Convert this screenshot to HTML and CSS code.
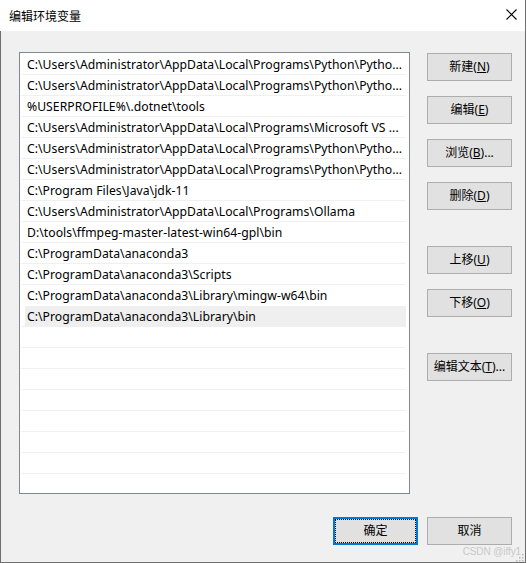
FILE: index.html
```html
<!DOCTYPE html>
<html lang="zh-CN">
<head>
<meta charset="utf-8">
<title>编辑环境变量</title>
<link rel="stylesheet" href="styles.css">
</head>
<body>
<div class="window">
  <div class="titlebar">
    <span class="title">编辑环境变量</span>
    <svg class="close" width="11" height="11" viewBox="0 0 11 11"><path d="M0.5 0.5 L10.5 10.5 M10.5 0.5 L0.5 10.5" stroke="#000" stroke-width="1.1" fill="none"/></svg>
  </div>
  <div class="content">
    <div class="main">
      <div class="list">
        <div class="row"><span class="cell">C:\Users\Administrator\AppData\Local\Programs\Python\Pytho...</span></div>
        <div class="row"><span class="cell">C:\Users\Administrator\AppData\Local\Programs\Python\Pytho...</span></div>
        <div class="row"><span class="cell">%USERPROFILE%\.dotnet\tools</span></div>
        <div class="row"><span class="cell">C:\Users\Administrator\AppData\Local\Programs\Microsoft VS ...</span></div>
        <div class="row"><span class="cell">C:\Users\Administrator\AppData\Local\Programs\Python\Pytho...</span></div>
        <div class="row"><span class="cell">C:\Users\Administrator\AppData\Local\Programs\Python\Pytho...</span></div>
        <div class="row"><span class="cell">C:\Program Files\Java\jdk-11</span></div>
        <div class="row"><span class="cell">C:\Users\Administrator\AppData\Local\Programs\Ollama</span></div>
        <div class="row"><span class="cell">D:\tools\ffmpeg-master-latest-win64-gpl\bin</span></div>
        <div class="row"><span class="cell">C:\ProgramData\anaconda3</span></div>
        <div class="row"><span class="cell">C:\ProgramData\anaconda3\Scripts</span></div>
        <div class="row"><span class="cell">C:\ProgramData\anaconda3\Library\mingw-w64\bin</span></div>
        <div class="row selected"><span class="cell">C:\ProgramData\anaconda3\Library\bin</span></div>
        <div class="row"></div>
        <div class="row"></div>
        <div class="row"></div>
        <div class="row"></div>
        <div class="row"></div>
        <div class="row"></div>
        <div class="row"></div>
        <div class="row"></div>
      </div>
      <div class="side">
        <button class="btn">新建(<u>N</u>)</button>
        <button class="btn">编辑(<u>E</u>)</button>
        <button class="btn">浏览(<u>B</u>)...</button>
        <button class="btn">删除(<u>D</u>)</button>
        <button class="btn gap">上移(<u>U</u>)</button>
        <button class="btn">下移(<u>O</u>)</button>
        <button class="btn gap">编辑文本(<u>T</u>)...</button>
      </div>
    </div>
    <div class="footer">
      <button class="btn focus">确定</button>
      <button class="btn">取消</button>
    </div>
  </div>
  <div class="watermark">CSDN @iffy1</div>
  <svg class="grip" width="9" height="9" viewBox="0 0 9 9">
    <rect x="7" y="1" width="1.5" height="1.5" fill="#b8b8b8"/>
    <rect x="4" y="4" width="1.5" height="1.5" fill="#b8b8b8"/>
    <rect x="7" y="4" width="1.5" height="1.5" fill="#b8b8b8"/>
    <rect x="1" y="7" width="1.5" height="1.5" fill="#b8b8b8"/>
    <rect x="4" y="7" width="1.5" height="1.5" fill="#b8b8b8"/>
    <rect x="7" y="7" width="1.5" height="1.5" fill="#b8b8b8"/>
  </svg>
</div>
</body>
</html>
```

FILE: styles.css
```css
html, body {
  margin: 0;
  padding: 0;
  background: #ffffff;
}
body {
  width: 527px;
  height: 563px;
  overflow: hidden;
  font-family: "Noto Sans", "Noto Sans CJK SC", sans-serif;
  font-size: 12px;
  color: #000;
}
.window {
  position: relative;
  width: 526px;
  height: 563px;
  box-sizing: border-box;
  border-right: 1px solid #6f6f6f;
  background: #f0f0f0;
  display: flex;
  flex-direction: column;
}
.titlebar {
  height: 31px;
  background: #ffffff;
  display: flex;
  align-items: center;
  padding-left: 9px;
  position: relative;
}
.title {
  font-family: "Noto Sans CJK SC", sans-serif;
  font-size: 12px;
  line-height: 14px;
  margin-top: 0;
}
.close {
  position: absolute;
  left: 506px;
  top: 9px;
}
.content {
  flex: 1;
  border-left: 1px solid #6f6f6f;
  border-bottom: 1px solid #6f6f6f;
  padding: 21px 13px 0 18px;
  display: flex;
  flex-direction: column;
}
.main {
  display: flex;
  align-items: flex-start;
}
.list {
  width: 392px;
  height: 442px;
  box-sizing: border-box;
  border: 1px solid #828790;
  background: #fff;
  overflow: hidden;
  padding: 0 3px 0 1px;
}
.row {
  height: 20px;
  border-top: 1px solid #f0f0f0;
  padding-left: 4px;
  display: flex;
}
.row:first-child {
  border-top-color: #fff;
}
.cell {
  flex: 1;
  min-width: 0;
  padding-left: 2px;
  font-size: 12.2px;
  letter-spacing: 0.04px;
  line-height: 21px;
  white-space: nowrap;
  overflow: visible;
}
.row.selected {
  border-top-color: #fff;
}
.row.selected .cell {
  background: #efefef;
  height: 21px;
  line-height: 22px;
}
.side {
  margin-left: 17px;
  margin-top: 1px;
  display: flex;
  flex-direction: column;
  gap: 15px;
}
.btn {
  width: 85px;
  height: 28px;
  box-sizing: border-box;
  border: 1px solid #adadad;
  background: #e1e1e1;
  font-family: "Noto Sans", "Noto Sans CJK SC", sans-serif;
  font-size: 12px;
  color: #000;
  padding: 0;
  margin: 0;
  line-height: 26px;
}
.btn u {
  text-decoration-thickness: 1px;
  text-underline-offset: 1px;
}
.side .btn.gap {
  margin-top: 21px;
}
.footer {
  display: flex;
  justify-content: flex-end;
  gap: 9px;
  margin-top: 23px;
}
.btn.focus {
  border: 2px solid #0078d7;
  outline: 1px dotted #000;
  outline-offset: -3px;
  line-height: 24px;
}
.watermark {
  position: absolute;
  right: 4px;
  bottom: 6px;
  font-family: "Liberation Sans", sans-serif;
  font-size: 10px;
  letter-spacing: -0.1px;
  color: #c8c8c8;
}
.grip {
  position: absolute;
  right: 1px;
  bottom: 1px;
}
```
